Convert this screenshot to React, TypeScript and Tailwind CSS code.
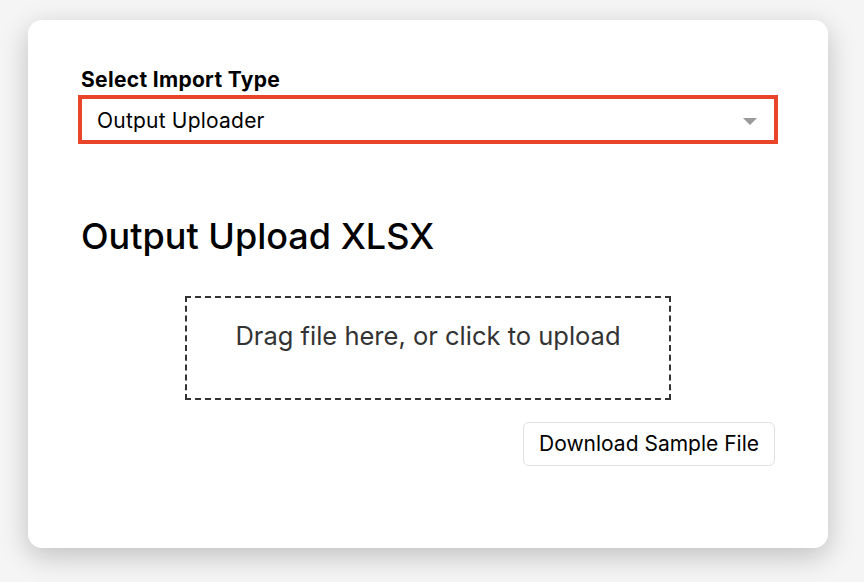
import React from 'react';

export default function App() {
  return (
    <div className="w-[864px] h-[582px] bg-[#f5f5f5] pt-[20px] pl-[28px]" style={{ fontFamily: 'Inter, "Noto Sans", sans-serif' }}>
      <div className="w-[800px] h-[528px] bg-white rounded-[14px] shadow-[0_8px_28px_rgba(0,0,0,0.22)] pl-[50px] pr-[50px] pt-[47px]">
        <label className="block text-[21px] font-bold text-black leading-[26px] ml-[3px] tracking-[0.015em]">Select Import Type</label>
        <div className="relative mt-[2px] h-[49px] border-[4px] border-[#e8452b] bg-white flex items-center pl-[15px] pt-[3px]">
          <span className="text-[21px] text-black tracking-[0.01em]">Output Uploader</span>
          <svg className="absolute right-[17px] top-[19px]" width="14" height="7" viewBox="0 0 14 7">
            <path d="M0 0 L14 0 L7 7 Z" fill="#9a9a9a" />
          </svg>
        </div>
        <h1 className="mt-[70px] ml-[3px] text-[36px] leading-[44px] font-medium text-black">Output Upload XLSX</h1>
        <div className="mt-[38px] ml-[107px] w-[486px] h-[104px] border-2 border-dashed border-[#333] flex items-start justify-center pt-[19px]">
          <span className="text-[25.5px] text-[#333]">Drag file here, or click to upload</span>
        </div>
        <div className="flex justify-end mt-[22px] mr-[3px]">
          <button className="h-[44px] px-[15px] border border-[#e2e2e2] rounded-[6px] bg-white text-[21px] text-black">
            Download Sample File
          </button>
        </div>
      </div>
    </div>
  );
}
